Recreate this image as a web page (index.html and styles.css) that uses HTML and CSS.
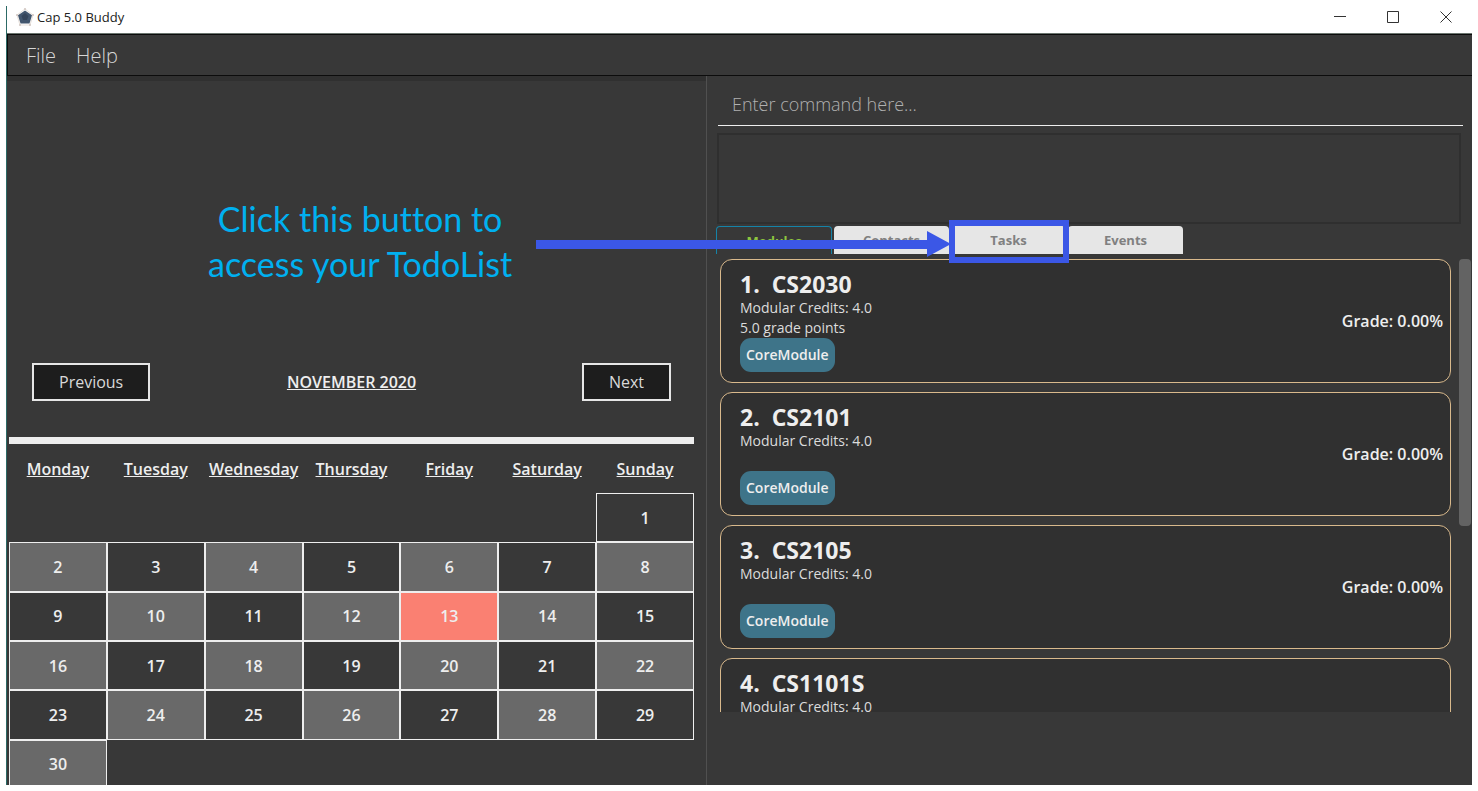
FILE: index.html
```html
<!DOCTYPE html>
<html lang="en">
<head>
<meta charset="utf-8">
<title>Cap 5.0 Buddy</title>
<link rel="stylesheet" href="styles.css">
</head>
<body>
<div class="window">
  <header class="titlebar">
    <svg class="app-icon" viewBox="0 0 18 18" aria-hidden="true">
      <path d="M9 1 17 7 14 17H4L1 7Z" fill="none" stroke="#e6dfda" stroke-width="1"/>
      <path d="M9 2.500 16 7.200 13.500 15.500H4.500L2 7.200Z" fill="#42566e"/>
      <path d="M9 5 12.500 8 11 12H7L5.500 8Z" fill="#34445a"/>
      <g fill="#d0c6c0"><circle cx="9" cy="1" r="1"/><circle cx="17" cy="7" r="1"/><circle cx="14" cy="17" r="1"/><circle cx="4" cy="17" r="1"/><circle cx="1" cy="7" r="1"/></g>
    </svg>
    <span class="app-name">Cap 5.0 Buddy</span>
    <div class="window-controls">
      <button type="button" aria-label="Minimize"><svg viewBox="0 0 12 12"><path d="M0 5.500H12"/></svg></button>
      <button type="button" aria-label="Maximize"><svg viewBox="0 0 12 12"><path d="M.5 .5H11.500V11.500H.5Z"/></svg></button>
      <button type="button" aria-label="Close"><svg viewBox="0 0 12 12"><path d="M.5 .5 11.500 11.500M11.500 .5 .5 11.500"/></svg></button>
    </div>
  </header>
  <nav class="menubar">
    <button type="button">File</button>
    <button type="button">Help</button>
  </nav>
  <main class="panes">
    <section class="calendar-pane">
      <div class="blank-area">
        <p class="hint">Click this button to<br>access your TodoList</p>
      </div>
      <div class="month-bar">
        <button type="button" class="month-button">Previous</button>
        <h2 class="month-name">NOVEMBER 2020</h2>
        <button type="button" class="month-button next">Next</button>
      </div>
      <div class="rule"></div>
      <div class="calendar-clip">
      <table class="calendar">
        <thead><tr><th>Monday</th><th>Tuesday</th><th>Wednesday</th><th>Thursday</th><th>Friday</th><th>Saturday</th><th>Sunday</th></tr></thead>
        <tbody>
          <tr><td class="empty" colspan="6"></td><td>1</td></tr>
          <tr><td class="alt">2</td><td>3</td><td class="alt">4</td><td>5</td><td class="alt">6</td><td>7</td><td class="alt">8</td></tr>
          <tr><td>9</td><td class="alt">10</td><td>11</td><td class="alt">12</td><td class="today">13</td><td class="alt">14</td><td>15</td></tr>
          <tr><td class="alt">16</td><td>17</td><td class="alt">18</td><td>19</td><td class="alt">20</td><td>21</td><td class="alt">22</td></tr>
          <tr><td>23</td><td class="alt">24</td><td>25</td><td class="alt">26</td><td>27</td><td class="alt">28</td><td>29</td></tr>
          <tr><td class="alt">30</td><td class="empty" colspan="6"></td></tr>
        </tbody>
      </table>
      </div>
    </section>
    <section class="work-pane">
      <input class="command" type="text" aria-label="Command" placeholder="Enter command here...">
      <output class="result" aria-label="Result"></output>
      <div class="tabs">
        <button type="button" class="tab selected">Modules</button>
        <button type="button" class="tab">Contacts</button>
        <div class="tab-slot">
          <button type="button" class="tab">Tasks</button>
          <svg class="arrow" viewBox="0 0 415 26" aria-hidden="true"><path d="M0 9H391V0L415 13 391 26V18H0Z"/></svg>
          <span class="highlight"></span>
        </div>
        <button type="button" class="tab">Events</button>
      </div>
      <div class="module-view">
        <div class="modules">
          <article class="module">
            <div class="details"><h3><span>1.</span><span>CS2030</span></h3><p>Modular Credits: 4.0</p><p>5.0 grade points</p><span class="tag">CoreModule</span></div>
            <p class="grade">Grade: 0.00%</p>
          </article>
          <article class="module">
            <div class="details"><h3><span>2.</span><span>CS2101</span></h3><p>Modular Credits: 4.0</p><p></p><span class="tag">CoreModule</span></div>
            <p class="grade">Grade: 0.00%</p>
          </article>
          <article class="module">
            <div class="details"><h3><span>3.</span><span>CS2105</span></h3><p>Modular Credits: 4.0</p><p></p><span class="tag">CoreModule</span></div>
            <p class="grade">Grade: 0.00%</p>
          </article>
          <article class="module">
            <div class="details"><h3><span>4.</span><span>CS1101S</span></h3><p>Modular Credits: 4.0</p></div>
          </article>
        </div>
        <div class="scroll-track"><div class="scroll-thumb"></div></div>
      </div>
    </section>
  </main>
</div>
</body>
</html>
```
FILE: styles.css
```css
* { box-sizing: border-box; }

body {
  margin: 0;
  padding: 6px;
  height: 100vh;
  overflow: hidden;
  background: #fff;
  color: #eee;
  font-family: "Open Sans", "Noto Sans", sans-serif;
}

h2, h3, p { margin: 0; }

button { font-family: inherit; }

.window {
  display: flex;
  flex-direction: column;
  height: 100%;
  border-left: 1px solid #2c6a66;
  background: #383838;
}

.titlebar {
  display: flex;
  flex: none;
  align-items: center;
  height: 28px;
  padding-left: 9px;
  padding-bottom: 6px;
  border-bottom: 1px solid #6b756f;
  background: #fff;
  color: #222;
}

.app-icon { width: 18px; height: 18px; margin-right: 3px; }

.app-name { font-size: 13px; line-height: 20px; }

.window-controls { display: flex; margin-left: auto; }

.window-controls button {
  display: flex;
  align-items: center;
  justify-content: center;
  width: 53px;
  height: 20px;
  padding: 0;
  border: 0;
  background: none;
}

.window-controls svg {
  width: 12px;
  height: 12px;
  fill: none;
  stroke: #333;
}

.menubar {
  display: flex;
  flex: none;
  gap: 20px;
  height: 42px;
  padding: 0 18px;
  border: 1px solid #0c0c0c;
  border-width: 1px 0 1px 1px;
}

.menubar button {
  padding: 0;
  border: 0;
  background: none;
  color: #d6d6d6;
  font-size: 20px;
  font-weight: 300;
}

.panes {
  display: grid;
  flex: 1;
  grid-template-columns: 700fr 765fr;
  min-height: 0;
}

.calendar-pane {
  display: flex;
  flex-direction: column;
  min-height: 0;
  padding: 0 12px 0 2px;
  border-right: 1px solid #505050;
}

.blank-area {
  position: relative;
  flex: none;
  height: 287px;
  margin: 0 -12px 0 -2px;
  border-top: 5px solid #303030;
}

.hint {
  position: absolute;
  top: 115px;
  left: 201px;
  color: #00b0f0;
  font-family: Lato, sans-serif;
  font-size: 34px;
  font-variant-ligatures: none;
  line-height: 45px;
  text-align: center;
  white-space: nowrap;
}

.month-bar {
  display: grid;
  flex: none;
  grid-template-columns: 1fr auto 1fr;
  align-items: center;
  padding: 0 23px;
}

.month-button {
  justify-self: start;
  height: 38px;
  padding: 0 25px;
  border: 2px solid #e6e6e6;
  background: #1d1d1d;
  color: #d9d9d9;
  font-size: 16px;
}

.next { justify-self: end; }

.month-name {
  font-size: 16px;
  font-weight: 600;
  text-decoration: underline;
}

.rule {
  flex: none;
  height: 7px;
  margin: 36px 0 0;
  background: #eee;
}

.calendar-clip { flex: 1; min-height: 0; overflow: hidden; }

.calendar {
  width: 100%;
  height: 345px;
  border-collapse: separate;
  border-spacing: 0;
  table-layout: fixed;
  font-size: 16px;
  font-weight: 600;
  text-align: center;
}

.calendar th {
  height: 49px;
  padding: 0;
  font-weight: 600;
  text-decoration: underline;
}

.calendar td { padding: 0; border: 1px solid #eee; }
.calendar .alt { background: #696969; }
.calendar .today { background: #fa8072; }
.calendar .empty { border: 0; }

.work-pane {
  display: flex;
  flex-direction: column;
  min-height: 0;
  padding: 7px 0 0 9px;
}

.command {
  height: 43px;
  margin: 0 9px 7px 2px;
  padding: 0 14px;
  border: 0;
  border-bottom: 1px solid #eee;
  outline: 0;
  background: none;
  color: #eee;
  font: 300 18px "Open Sans", sans-serif;
}

.command::placeholder { color: #b0b0b0; opacity: 1; }

.result {
  height: 91px;
  margin: 0 11px 2px 1px;
  border: 2px solid #2f2f2f;
}

.tabs { display: flex; gap: 2px; height: 28px; margin-bottom: 5px; }

.tab {
  width: 115px;
  height: 28px;
  padding: 0;
  border: 0;
  border-radius: 4px 4px 0 0;
  background: #e6e6e6;
  color: #808080;
  font-size: 13px;
  font-weight: 700;
}

.selected {
  width: 116px;
  border: 1px solid #1583a8;
  border-bottom: 0;
  background: #383838;
  color: #8dc63f;
}

.tab-slot { position: relative; }

.highlight {
  position: absolute;
  inset: -6px -3px -9px -2px;
  border: 6px solid #3b57e6;
}

.arrow {
  position: absolute;
  top: 5px;
  right: 115px;
  width: 415px;
  height: 26px;
  fill: #3b57e6;
}

.module-view {
  display: flex;
  gap: 8px;
  height: 453px;
  padding: 0 1px 0 4px;
}

.modules {
  display: flex;
  flex: 1;
  flex-direction: column;
  gap: 9px;
  overflow: hidden;
}

.module {
  display: flex;
  flex: none;
  align-items: center;
  justify-content: space-between;
  height: 124px;
  padding: 0 7px 0 19px;
  border: 1px solid #d9b98c;
  border-radius: 12px;
  background: #303030;
}

.details { height: 102px; }

.details h3 {
  display: flex;
  gap: 12px;
  font-size: 23px;
  line-height: 28px;
}

.details p { height: 20px; font-size: 14px; line-height: 20px; color: #dcdcdc; }

.tag {
  display: inline-block;
  padding: 0 6px;
  border-radius: 11px;
  background: #3e7489;
  font-size: 14px;
  font-weight: 600;
  line-height: 34px;
}

.grade { font-size: 16px; font-weight: 600; }

.scroll-track { width: 12px; }

.scroll-thumb { height: 267px; border-radius: 4px; background: #636363; }
```
